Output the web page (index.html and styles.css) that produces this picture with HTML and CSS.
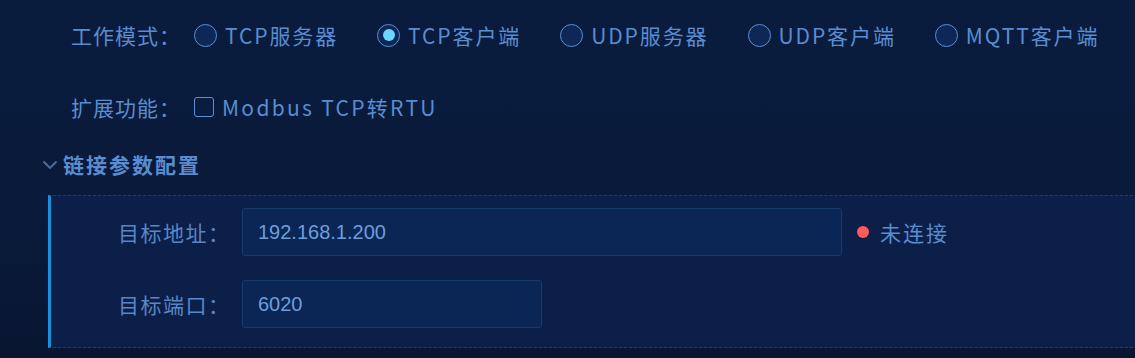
FILE: index.html
```html
<!DOCTYPE html>
<html lang="zh-CN">
<head>
<meta charset="utf-8">
<title>配置</title>
<link rel="stylesheet" href="styles.css">
</head>
<body>
<div class="page">
  <div class="form-row mode-row">
    <span class="row-label">工作模式：</span>
    <div class="options">
      <label class="opt"><span class="radio"></span><span class="opt-text">TCP服务器</span></label>
      <label class="opt"><span class="radio checked"></span><span class="opt-text">TCP客户端</span></label>
      <label class="opt"><span class="radio"></span><span class="opt-text">UDP服务器</span></label>
      <label class="opt"><span class="radio"></span><span class="opt-text">UDP客户端</span></label>
      <label class="opt"><span class="radio"></span><span class="opt-text">MQTT客户端</span></label>
    </div>
  </div>
  <div class="form-row ext-row">
    <span class="row-label">扩展功能：</span>
    <label class="opt"><span class="checkbox"></span><span class="opt-text modbus">Modbus TCP转RTU</span></label>
  </div>
  <div class="section-head">
    <svg class="chevron" width="16" height="10" viewBox="0 0 16 10"><path d="M1.5 1.5 L8 8 L14.5 1.5" fill="none" stroke="#4d6f9f" stroke-width="1.8"/></svg>
    <span class="section-title">链接参数配置</span>
  </div>
  <div class="panel">
    <div class="field-row">
      <span class="field-label">目标地址：</span>
      <div class="input wide">192.168.1.200</div>
      <span class="status"><span class="dot"></span><span class="status-text">未连接</span></span>
    </div>
    <div class="field-row">
      <span class="field-label">目标端口：</span>
      <div class="input narrow">6020</div>
    </div>
  </div>
</div>
</body>
</html>
```

FILE: styles.css
```css
html, body {
  margin: 0;
  padding: 0;
}
body {
  width: 1135px;
  height: 358px;
  overflow: hidden;
  background: linear-gradient(180deg, #0a1c3e 0%, #091a3a 60%, #081632 100%);
  font-family: "Noto Sans CJK SC", "Noto Sans", sans-serif;
  color: #5a8dd0;
}
.page {
  display: flex;
  flex-direction: column;
  width: 1135px;
  overflow: hidden;
}
.form-row {
  display: flex;
  align-items: center;
  padding-left: 71px;
  height: 36px;
}
.mode-row {
  margin-top: 17px;
}
.ext-row {
  margin-top: 36px;
}
.row-label {
  font-size: 21px;
  letter-spacing: 1px;
  width: 123px;
  flex: none;
  white-space: nowrap;
}
.options {
  display: flex;
  align-items: center;
}
.opt {
  display: flex;
  align-items: center;
  margin-right: 39px;
}
.opt-text {
  font-size: 21px;
  letter-spacing: 1.9px;
  white-space: nowrap;
}
.opt-text.modbus {
  letter-spacing: 2.3px;
}
.radio {
  width: 21px;
  height: 21px;
  border: 1.6px solid #5b8fd6;
  border-radius: 50%;
  background: #0d2756;
  margin-right: 8px;
  display: flex;
  align-items: center;
  justify-content: center;
  flex: none;
}
.radio.checked::after {
  content: "";
  width: 12px;
  height: 12px;
  border-radius: 50%;
  background: #6cd6ff;
}
.checkbox {
  width: 18px;
  height: 18px;
  border: 1.6px solid #5b8fd6;
  border-radius: 3px;
  background: #0a1d40;
  margin-right: 8px;
  flex: none;
}
.section-head {
  display: flex;
  align-items: center;
  height: 30px;
  margin-top: 24px;
  padding-left: 42px;
}
.chevron {
  margin-right: 5px;
  margin-top: 2px;
}
.section-title {
  font-size: 21px;
  font-weight: 700;
  letter-spacing: 2px;
  color: #5a8dd0;
}
.panel {
  margin-top: 16px;
  margin-left: 48px;
  width: 1100px;
  flex: none;
  border-left: 3px solid #1b8fd8;
  border-top: 1px dashed #1f3d6e;
  border-bottom: 1px dashed #1f3d6e;
  background: #0b1f48;
  padding: 12px 0 19px 67px;
  display: flex;
  flex-direction: column;
  gap: 24px;
}
.field-row {
  display: flex;
  align-items: center;
  height: 48px;
}
.field-label {
  width: 124px;
  flex: none;
  font-size: 21px;
  letter-spacing: 1.5px;
  color: #5a86c6;
}
.input {
  box-sizing: border-box;
  height: 48px;
  border: 1px solid #173a6c;
  border-radius: 3px;
  background: #0b2655;
  display: flex;
  align-items: center;
  padding-left: 15px;
  font-family: "Liberation Sans", Arial, sans-serif;
  font-size: 20px;
  color: #6f9ddc;
}
.input.wide {
  width: 600px;
}
.input.narrow {
  width: 300px;
}
.status {
  display: flex;
  align-items: center;
  margin-left: 15px;
}
.dot {
  width: 12px;
  height: 12px;
  border-radius: 50%;
  background: #ff5a5a;
  margin-right: 11px;
}
.status-text {
  font-size: 21px;
  letter-spacing: 2px;
  color: #5a8dd0;
}
```
